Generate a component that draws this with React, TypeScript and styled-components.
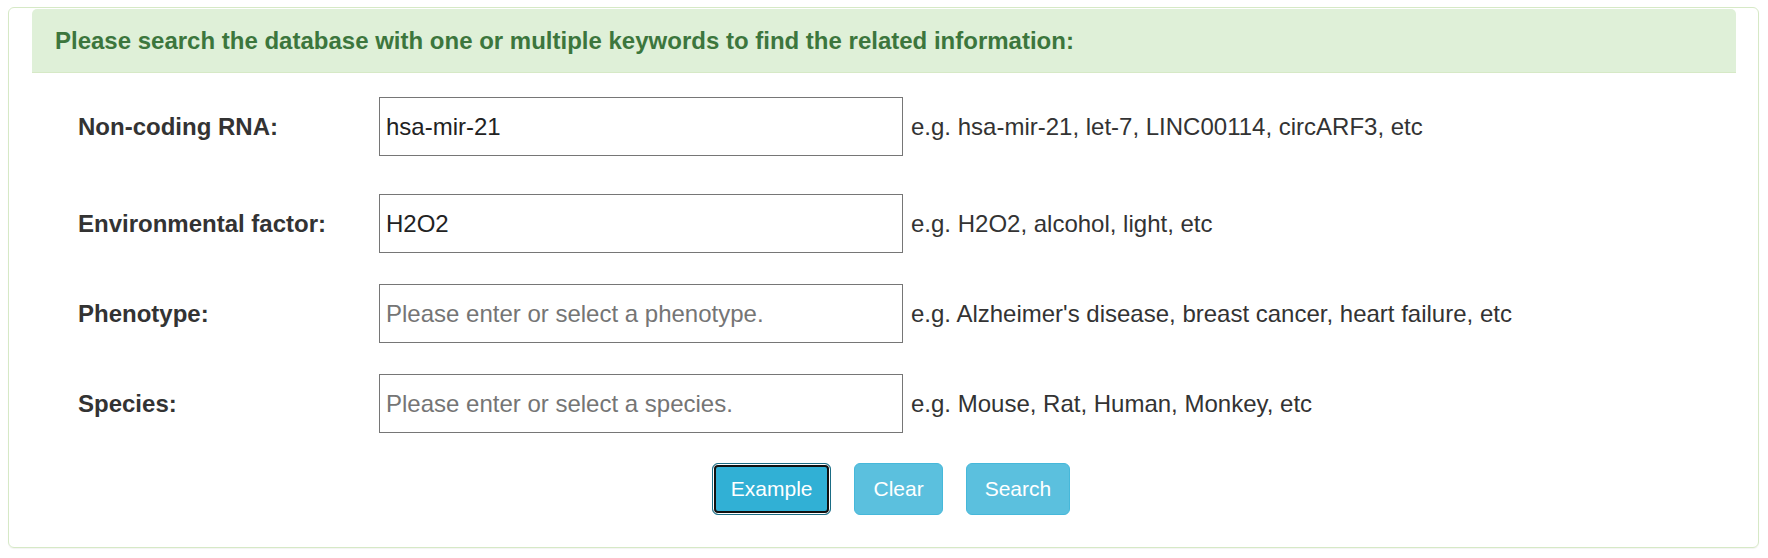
import React from "react";
import styled, { createGlobalStyle } from "styled-components";

const GlobalStyle = createGlobalStyle`
  html, body {
    margin: 0;
    padding: 0;
    background: #ffffff;
    font-family: "Liberation Sans", Arial, sans-serif;
    color: #333333;
  }
  * { box-sizing: border-box; }
`;

const Page = styled.div`
  padding: 7px 9px 10px 8px;
`;

const Panel = styled.section`
  height: 541px;
  border: 1px solid #d6e9c6;
  border-radius: 6px;
  box-shadow: 0 1px 1px rgba(0, 0, 0, 0.05);
  padding: 1px 22px 0 23px;
  display: flex;
  flex-direction: column;
`;

const Heading = styled.div`
  height: 64px;
  background: #dff0d8;
  border-bottom: 1px solid #d6e9c6;
  border-radius: 5px 5px 0 0;
  color: #3c763d;
  font-weight: bold;
  font-size: 24px;
  display: flex;
  align-items: center;
  padding: 0 0 0 23px;
`;

const Form = styled.form`
  display: flex;
  flex-direction: column;
  padding-left: 46px;
`;

const FieldRow = styled.div<{ $top: number }>`
  display: grid;
  grid-template-columns: 301px 524px auto;
  align-items: center;
  margin-top: ${(p) => p.$top}px;
`;

const Label = styled.label`
  font-size: 24px;
  font-weight: bold;
  color: #333333;
`;

const Input = styled.input`
  height: 59px;
  width: 524px;
  border: 1px solid #767676;
  border-radius: 0;
  padding: 0 6px;
  font-family: "Liberation Sans", Arial, sans-serif;
  font-size: 24px;
  color: #222222;
  background: #ffffff;
  outline: none;
  &::placeholder {
    color: #757575;
  }
`;

const Hint = styled.span`
  font-size: 24px;
  color: #333333;
  margin-left: 8px;
  white-space: nowrap;
`;

const ButtonBar = styled.div`
  display: flex;
  justify-content: center;
  gap: 23px;
  margin-top: 30px;
  padding-right: 32px;
`;

const Button = styled.button<{ $focused?: boolean }>`
  height: 52px;
  padding: 0 18px;
  font-family: "Liberation Sans", Arial, sans-serif;
  font-size: 21px;
  color: #ffffff;
  border-radius: 6px;
  cursor: pointer;
  background: ${(p) => (p.$focused ? "#31b0d5" : "#5bc0de")};
  border: 1.5px solid ${(p) => (p.$focused ? "#1b6d85" : "#46b8da")};
  box-shadow: ${(p) =>
    p.$focused ? "inset 0 0 0 1px #ffffff, inset 0 0 0 3px #111111" : "none"};
  outline: none;
`;

const fields = [
  {
    label: "Non-coding RNA:",
    value: "hsa-mir-21",
    placeholder: "",
    hint: "e.g. hsa-mir-21, let-7, LINC00114, circARF3, etc",
    top: 24,
  },
  {
    label: "Environmental factor:",
    value: "H2O2",
    placeholder: "",
    hint: "e.g. H2O2, alcohol, light, etc",
    top: 38,
  },
  {
    label: "Phenotype:",
    value: "",
    placeholder: "Please enter or select a phenotype.",
    hint: "e.g. Alzheimer's disease, breast cancer, heart failure, etc",
    top: 31,
  },
  {
    label: "Species:",
    value: "",
    placeholder: "Please enter or select a species.",
    hint: "e.g. Mouse, Rat, Human, Monkey, etc",
    top: 31,
  },
];

export default function App() {
  return (
    <>
      <GlobalStyle />
      <Page>
        <Panel>
          <Heading>
            Please search the database with one or multiple keywords to find the related information:
          </Heading>
          <Form onSubmit={(e) => e.preventDefault()}>
            {fields.map((f) => (
              <FieldRow key={f.label} $top={f.top}>
                <Label>{f.label}</Label>
                <Input defaultValue={f.value} placeholder={f.placeholder} />
                <Hint>{f.hint}</Hint>
              </FieldRow>
            ))}
            <ButtonBar>
              <Button type="button" $focused>
                Example
              </Button>
              <Button type="button">Clear</Button>
              <Button type="button">Search</Button>
            </ButtonBar>
          </Form>
        </Panel>
      </Page>
    </>
  );
}
